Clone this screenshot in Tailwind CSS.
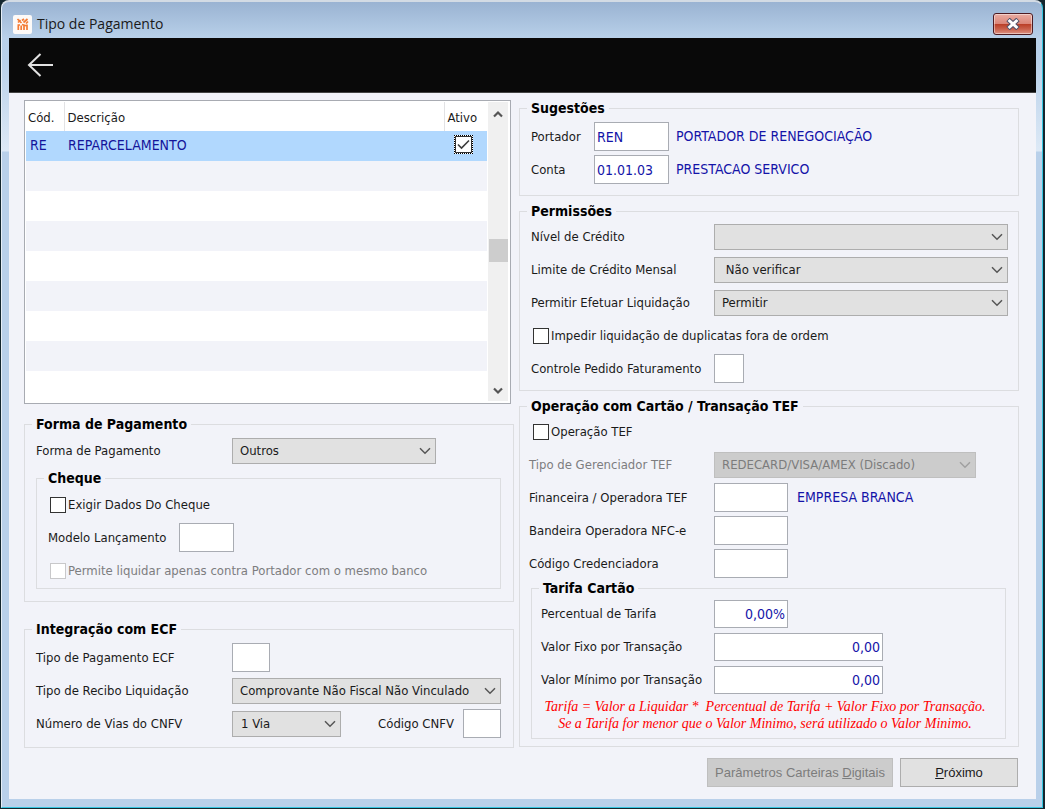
<!DOCTYPE html>
<html lang="pt-BR">
<head>
  <meta charset="UTF-8" />
  <title>Tipo de Pagamento</title>
  <meta name="viewport" content="width=device-width, initial-scale=1.0" />
  <script src="https://cdn.jsdelivr.net/npm/@tailwindcss/browser@4"></script>
</head>
<body class="bg-[#14262e] font-['DejaVu_Sans_Condensed','DejaVu_Sans',sans-serif] text-[13px] leading-[17px] text-[#1a1a1a]">

  <!-- setas reutilizadas -->
  <svg class="hidden">
    <symbol id="chevron" viewBox="0 0 12 8"><path d="M1 1.2 L6 6.2 L11 1.2" fill="none" stroke="currentColor" stroke-width="1.5" /></symbol>
    <symbol id="scroll-arrow" viewBox="0 0 10 8"><path d="M1 1.5 L5 5.5 L9 1.5" fill="none" stroke="currentColor" stroke-width="2.2" /></symbol>
  </svg>

  <div class="min-h-screen pl-px pr-[2px] pb-px flex">
    <div class="flex-1 flex flex-col rounded-t-lg border-t-2 border-l border-r border-b border-t-[#d3dbe4] border-l-[#e6eef7] border-r-[#35c5e0] border-b-[#35c5e0] bg-[linear-gradient(to_bottom,#9ab3d2_0px,#b8d0e9_36px,#b9d1ea_60px,#dde9f6_149px,#b9d0ea_150px)] pl-[7px] pr-1.5 pb-2">

      <header class="h-9 flex items-center justify-between pl-1 pr-[3px]">
        <div class="flex items-center gap-[5px] pt-2">
          <svg class="size-[19px]" viewBox="0 0 19 19">
            <rect width="19" height="19" rx="2" fill="#fdfaf8" />
            <g fill="none" stroke="#f47b35" stroke-width="1.7">
              <path d="M4.5 4 L8.5 8 M5 7.5 L7.5 5 M14.5 4 L10.5 7.5 M11 4 L9 5.5 M13 8.5 L15 6.5" />
              <path d="M5.3 15 V10.5 M8.2 15 V10.5 M11 15 V10.5 M14 15 V9.5 M4.5 10 H7 M9 9.5 L14 11" />
            </g>
          </svg>
          <h1 class="font-['Open_Sans',sans-serif] text-[14px] leading-5">Tipo de Pagamento</h1>
        </div>
        <button type="button" aria-label="Fechar" class="w-10 h-[22px] mt-2 rounded-[3px] border border-[#4d1b22] bg-[linear-gradient(to_bottom,#e9aca2_0%,#db8679_48%,#b93d26_50%,#c9604b_75%,#dd9384_100%)] shadow-[inset_0_0_0_1px_rgba(255,255,255,0.45)] flex items-center justify-center">
          <svg class="w-4 h-3" viewBox="0 0 16 12">
            <path d="M3 1.5 L13 10.5 M13 1.5 L3 10.5" stroke="#50526a" stroke-width="5" />
            <path d="M3.6 2 L12.4 10 M12.4 2 L3.6 10" stroke="#fff" stroke-width="3" />
          </svg>
        </button>
      </header>

      <nav class="h-[55px] bg-[#090909] border-b border-[#444] flex items-center px-4">
        <button type="button" aria-label="Voltar" class="text-[#e2e2e2]">
          <svg class="w-8 h-7" viewBox="0 0 32 28"><path d="M28 14 H4 M15.5 3 L4 14 L15.5 25" fill="none" stroke="currentColor" stroke-width="2" /></svg>
        </button>
      </nav>

      <main class="flex-1 bg-[#f2f3f9] pl-[15px] pr-[17px] pt-[7px]">
        <div class="grid grid-cols-[490fr_500fr] gap-x-[5px]">

          <!-- coluna esquerda -->
          <div class="flex flex-col">
            <div class="mr-[3px] flex border border-[#a8abb2] bg-white p-px pr-[2px] pb-[2px]">
              <table class="flex-1 border-collapse table-fixed">
                <thead>
                  <tr class="h-[29px] text-left">
                    <th class="w-[38px] font-normal pl-[2px] pt-[2px] border-r border-[#e2e2e4]">Cód.</th>
                    <th class="font-normal pl-[3px] pt-[2px] border-r border-[#e2e2e4]">Descrição</th>
                    <th class="w-[43px] font-normal pl-[3px] pt-[2px]">Ativo</th>
                  </tr>
                </thead>
                <tbody>
                  <tr class="h-[30px] bg-[#b1d8fe] text-[14px] text-[#14149a]">
                    <td class="pl-1 pb-[2px]">RE</td>
                    <td class="pl-1 pb-[2px]">REPARCELAMENTO</td>
                    <td>
                      <label class="relative block size-[19px] ml-2.5 -mt-1 border border-dotted border-black bg-white">
                        <input type="checkbox" checked aria-label="Ativo" class="appearance-none absolute inset-0 border border-[#333]" />
                        <svg class="absolute inset-[2px]" viewBox="0 0 13 13"><path d="M1 6.5 L4.5 10 L12 2.5" fill="none" stroke="#3c3c3c" stroke-width="1.6" /></svg>
                      </label>
                    </td>
                  </tr>
                  <tr class="h-[30px] bg-[#f2f3f9]"><td></td><td></td><td></td></tr>
                  <tr class="h-[30px]"><td></td><td></td><td></td></tr>
                  <tr class="h-[30px] bg-[#f2f3f9]"><td></td><td></td><td></td></tr>
                  <tr class="h-[30px]"><td></td><td></td><td></td></tr>
                  <tr class="h-[30px] bg-[#f2f3f9]"><td></td><td></td><td></td></tr>
                  <tr class="h-[30px]"><td></td><td></td><td></td></tr>
                  <tr class="h-[30px] bg-[#f2f3f9]"><td></td><td></td><td></td></tr>
                  <tr class="h-[30px]"><td></td><td></td><td></td></tr>
                </tbody>
              </table>
              <div class="w-5 ml-px bg-[#f0f0f0] text-[#555] flex flex-col items-center">
                <svg class="w-2.5 h-2 mt-2 rotate-180"><use href="#scroll-arrow" /></svg>
                <div class="w-[19px] h-[23px] mt-[121px] bg-[#cdcdcd]"></div>
                <svg class="w-2.5 h-2 mt-auto mb-[6px]"><use href="#scroll-arrow" /></svg>
              </div>
            </div>

            <fieldset class="mt-3 border border-[#dcdde0] pl-[11px] pr-3 pt-px pb-3">
              <legend class="-ml-1 px-1 text-[14px] font-bold text-black">Forma de Pagamento</legend>
              <div class="h-[33px] flex items-center">
                <label for="forma" class="w-[196px]">Forma de Pagamento</label>
                <div class="relative w-[204px] text-[#555]">
                  <select id="forma" class="appearance-none w-full h-[26px] border border-[#adadad] bg-[#e1e1e1] pl-[7px] text-[#1a1a1a]"><option>Outros</option></select>
                  <svg class="absolute right-[5px] top-[9px] w-3 h-2 pointer-events-none"><use href="#chevron" /></svg>
                </div>
              </div>
              <fieldset class="mt-[3px] border border-[#dcdde0] pl-[11px] pr-3 pt-px pb-px">
                <legend class="-ml-1 px-1 text-[14px] font-bold text-black">Cheque</legend>
                <div class="h-[33px] flex items-center">
                  <label class="flex items-center gap-[2px] pl-0.5"><input type="checkbox" class="appearance-none size-4 border border-[#333] bg-white" />Exigir Dados Do Cheque</label>
                </div>
                <div class="h-[33px] flex items-center">
                  <label for="modelo" class="w-[131px]">Modelo Lançamento</label>
                  <input id="modelo" type="text" class="w-[55px] h-[29px] border border-[#a9acb3] bg-white px-1 text-[#1414a8]" />
                </div>
                <div class="h-[33px] flex items-center">
                  <label class="flex items-center gap-[2px] pl-0.5 text-[#7d7d80]"><input type="checkbox" disabled class="appearance-none size-4 border border-[#c8c8ca] bg-white" />Permite liquidar apenas contra Portador com o mesmo banco</label>
                </div>
              </fieldset>
            </fieldset>

            <fieldset class="mt-[19px] border border-[#dcdde0] pl-[11px] pr-3 pt-[3px] pb-[7px]">
              <legend class="-ml-1 px-1 text-[14px] font-bold text-black">Integração com ECF</legend>
              <div class="h-[33px] flex items-center">
                <label for="tipoEcf" class="w-[196px]">Tipo de Pagamento ECF</label>
                <input id="tipoEcf" type="text" class="w-[38px] h-[29px] border border-[#a9acb3] bg-white px-1 text-[#1414a8]" />
              </div>
              <div class="h-[33px] flex items-center">
                <label for="recibo" class="w-[196px]">Tipo de Recibo Liquidação</label>
                <div class="relative flex-1 text-[#555]">
                  <select id="recibo" class="appearance-none w-full h-[26px] border border-[#adadad] bg-[#e1e1e1] pl-[7px] text-[#1a1a1a]"><option>Comprovante Não Fiscal Não Vinculado</option></select>
                  <svg class="absolute right-[5px] top-[9px] w-3 h-2 pointer-events-none"><use href="#chevron" /></svg>
                </div>
              </div>
              <div class="h-[33px] flex items-center">
                <label for="vias" class="w-[196px]">Número de Vias do CNFV</label>
                <div class="relative w-[109px] text-[#555]">
                  <select id="vias" class="appearance-none w-full h-[26px] border border-[#adadad] bg-[#e1e1e1] pl-2 text-[#1a1a1a]"><option>1 Via</option></select>
                  <svg class="absolute right-[5px] top-[9px] w-3 h-2 pointer-events-none"><use href="#chevron" /></svg>
                </div>
                <label for="cnfv" class="ml-auto mr-[9px]">Código CNFV</label>
                <input id="cnfv" type="text" class="w-[38px] h-[29px] border border-[#a9acb3] bg-white px-1 text-[#1414a8]" />
              </div>
            </fieldset>
          </div>

          <!-- coluna direita -->
          <div class="flex flex-col gap-[7px]">
            <fieldset class="border border-[#dcdde0] pl-[11px] pr-2.5 pt-[3px] pb-[9px]">
              <legend class="-ml-1 px-1 text-[14px] font-bold text-black">Sugestões</legend>
              <div class="h-[33px] flex items-center">
                <label for="portador" class="w-[63px]">Portador</label>
                <input id="portador" type="text" value="REN" class="w-[75px] h-[29px] border border-[#a9acb3] bg-white px-[2px] text-[14px] text-[#1414a8]" />
                <span class="ml-[7px] text-[14px] text-[#1414a8]">PORTADOR DE RENEGOCIAÇÃO</span>
              </div>
              <div class="h-[33px] flex items-center">
                <label for="conta" class="w-[63px]">Conta</label>
                <input id="conta" type="text" value="01.01.03" class="w-[75px] h-[29px] border border-[#a9acb3] bg-white px-[2px] text-[14px] text-[#1414a8]" />
                <span class="ml-[7px] text-[14px] text-[#1414a8]">PRESTACAO SERVICO</span>
              </div>
            </fieldset>

            <fieldset class="border border-[#dcdde0] pl-[11px] pr-2.5 pb-[5px]">
              <legend class="-ml-1 px-1 text-[14px] font-bold text-black">Permissões</legend>
              <div class="h-[33px] flex items-center">
                <label for="nivel" class="w-[183px]">Nível de Crédito</label>
                <div class="relative flex-1 text-[#555]">
                  <select id="nivel" class="appearance-none w-full h-[26px] border border-[#adadad] bg-[#e1e1e1] pl-[7px] text-[#1a1a1a]"><option></option></select>
                  <svg class="absolute right-[5px] top-[9px] w-3 h-2 pointer-events-none"><use href="#chevron" /></svg>
                </div>
              </div>
              <div class="h-[33px] flex items-center">
                <label for="limite" class="w-[183px]">Limite de Crédito Mensal</label>
                <div class="relative flex-1 text-[#555]">
                  <select id="limite" class="appearance-none w-full h-[26px] border border-[#adadad] bg-[#e1e1e1] pl-[7px] text-[#1a1a1a]"><option>&nbsp;Não verificar</option></select>
                  <svg class="absolute right-[5px] top-[9px] w-3 h-2 pointer-events-none"><use href="#chevron" /></svg>
                </div>
              </div>
              <div class="h-[33px] flex items-center">
                <label for="efetuar" class="w-[183px]">Permitir Efetuar Liquidação</label>
                <div class="relative flex-1 text-[#555]">
                  <select id="efetuar" class="appearance-none w-full h-[26px] border border-[#adadad] bg-[#e1e1e1] pl-[7px] text-[#1a1a1a]"><option>Permitir</option></select>
                  <svg class="absolute right-[5px] top-[9px] w-3 h-2 pointer-events-none"><use href="#chevron" /></svg>
                </div>
              </div>
              <div class="h-[33px] flex items-center">
                <label class="flex items-center gap-[2px] pl-0.5"><input type="checkbox" class="appearance-none size-4 border border-[#333] bg-white" />Impedir liquidação de duplicatas fora de ordem</label>
              </div>
              <div class="h-[33px] flex items-center">
                <label for="controle" class="w-[183px]">Controle Pedido Faturamento</label>
                <input id="controle" type="text" class="w-[30px] h-[29px] border border-[#a9acb3] bg-white px-1 text-[#1414a8]" />
              </div>
            </fieldset>

            <fieldset class="border border-[#dcdde0] pl-[9px] pr-3 pb-[7px]">
              <legend class="-ml-0.5 px-1 text-[14px] font-bold text-black">Operação com Cartão / Transação TEF</legend>
              <div class="h-[33px] flex items-center">
                <label class="flex items-center gap-[2px] pl-1"><input type="checkbox" class="appearance-none size-4 border border-[#333] bg-white" />Operação TEF</label>
              </div>
              <div class="h-[33px] flex items-center">
                <label for="gerenciador" class="w-[185px] text-[#7d7d80]">Tipo de Gerenciador TEF</label>
                <div class="relative w-[262px] text-[#a0a0a0]">
                  <select id="gerenciador" disabled class="appearance-none w-full h-[26px] border border-[#bfbfbf] bg-[#cccccc] pl-[7px] text-[#7c7c7c] opacity-100"><option>REDECARD/VISA/AMEX (Discado)</option></select>
                  <svg class="absolute right-[5px] top-[9px] w-3 h-2 pointer-events-none"><use href="#chevron" /></svg>
                </div>
              </div>
              <div class="h-[33px] flex items-center">
                <label for="financeira" class="w-[185px]">Financeira / Operadora TEF</label>
                <input id="financeira" type="text" class="w-[74px] h-[29px] border border-[#a9acb3] bg-white px-1 text-[#1414a8]" />
                <span class="ml-[9px] text-[14px] text-[#1414a8]">EMPRESA BRANCA</span>
              </div>
              <div class="h-[33px] flex items-center">
                <label for="bandeira" class="w-[185px]">Bandeira Operadora NFC-e</label>
                <input id="bandeira" type="text" class="w-[74px] h-[29px] border border-[#a9acb3] bg-white px-1 text-[#1414a8]" />
              </div>
              <div class="h-[33px] flex items-center">
                <label for="credenciadora" class="w-[185px]">Código Credenciadora</label>
                <input id="credenciadora" type="text" class="w-[74px] h-[29px] border border-[#a9acb3] bg-white px-1 text-[#1414a8]" />
              </div>
              <fieldset class="ml-0.5 border border-[#dcdde0] pl-[9px] pb-1.5">
                <legend class="-ml-0.5 px-1 text-[14px] font-bold text-black">Tarifa Cartão</legend>
                <div class="h-[33px] flex items-center">
                  <label for="percentual" class="w-[173px]">Percentual de Tarifa</label>
                  <input id="percentual" type="text" value="0,00%" class="w-[74px] h-7 border border-[#a9acb3] bg-white px-[2px] text-right text-[14px] text-[#1414a8]" />
                </div>
                <div class="h-[33px] flex items-center">
                  <label for="fixo" class="w-[173px]">Valor Fixo por Transação</label>
                  <input id="fixo" type="text" value="0,00" class="w-[169px] h-7 border border-[#a9acb3] bg-white px-[2px] text-right text-[14px] text-[#1414a8]" />
                </div>
                <div class="h-[33px] flex items-center">
                  <label for="minimo" class="w-[173px]">Valor Mínimo por Transação</label>
                  <input id="minimo" type="text" value="0,00" class="w-[169px] h-7 border border-[#a9acb3] bg-white px-[2px] text-right text-[14px] text-[#1414a8]" />
                </div>
                <p class="pt-0.5 pr-4 text-center italic font-['Liberation_Serif',serif] text-[14px] leading-[17px] text-[#ff0000] whitespace-pre">Tarifa = Valor a Liquidar *  Percentual de Tarifa + Valor Fixo por Transação.
Se a Tarifa for menor que o Valor Minimo, será utilizado o Valor Minimo.</p>
              </fieldset>
            </fieldset>
          </div>
        </div>

        <footer class="mt-2.5 mb-3 pr-px flex justify-end gap-[7px] font-['Liberation_Sans',sans-serif] text-[13px]">
          <button type="button" disabled class="w-[186px] h-[29px] border border-[#bfbfbf] bg-[#cccccc] text-[#7c7c7c]">Parâmetros Carteiras <u>D</u>igitais</button>
          <button type="button" class="w-[118px] h-[29px] border border-[#adadad] bg-[#e1e1e1]"><u>P</u>róximo</button>
        </footer>
      </main>
    </div>
  </div>
</body>
</html>
